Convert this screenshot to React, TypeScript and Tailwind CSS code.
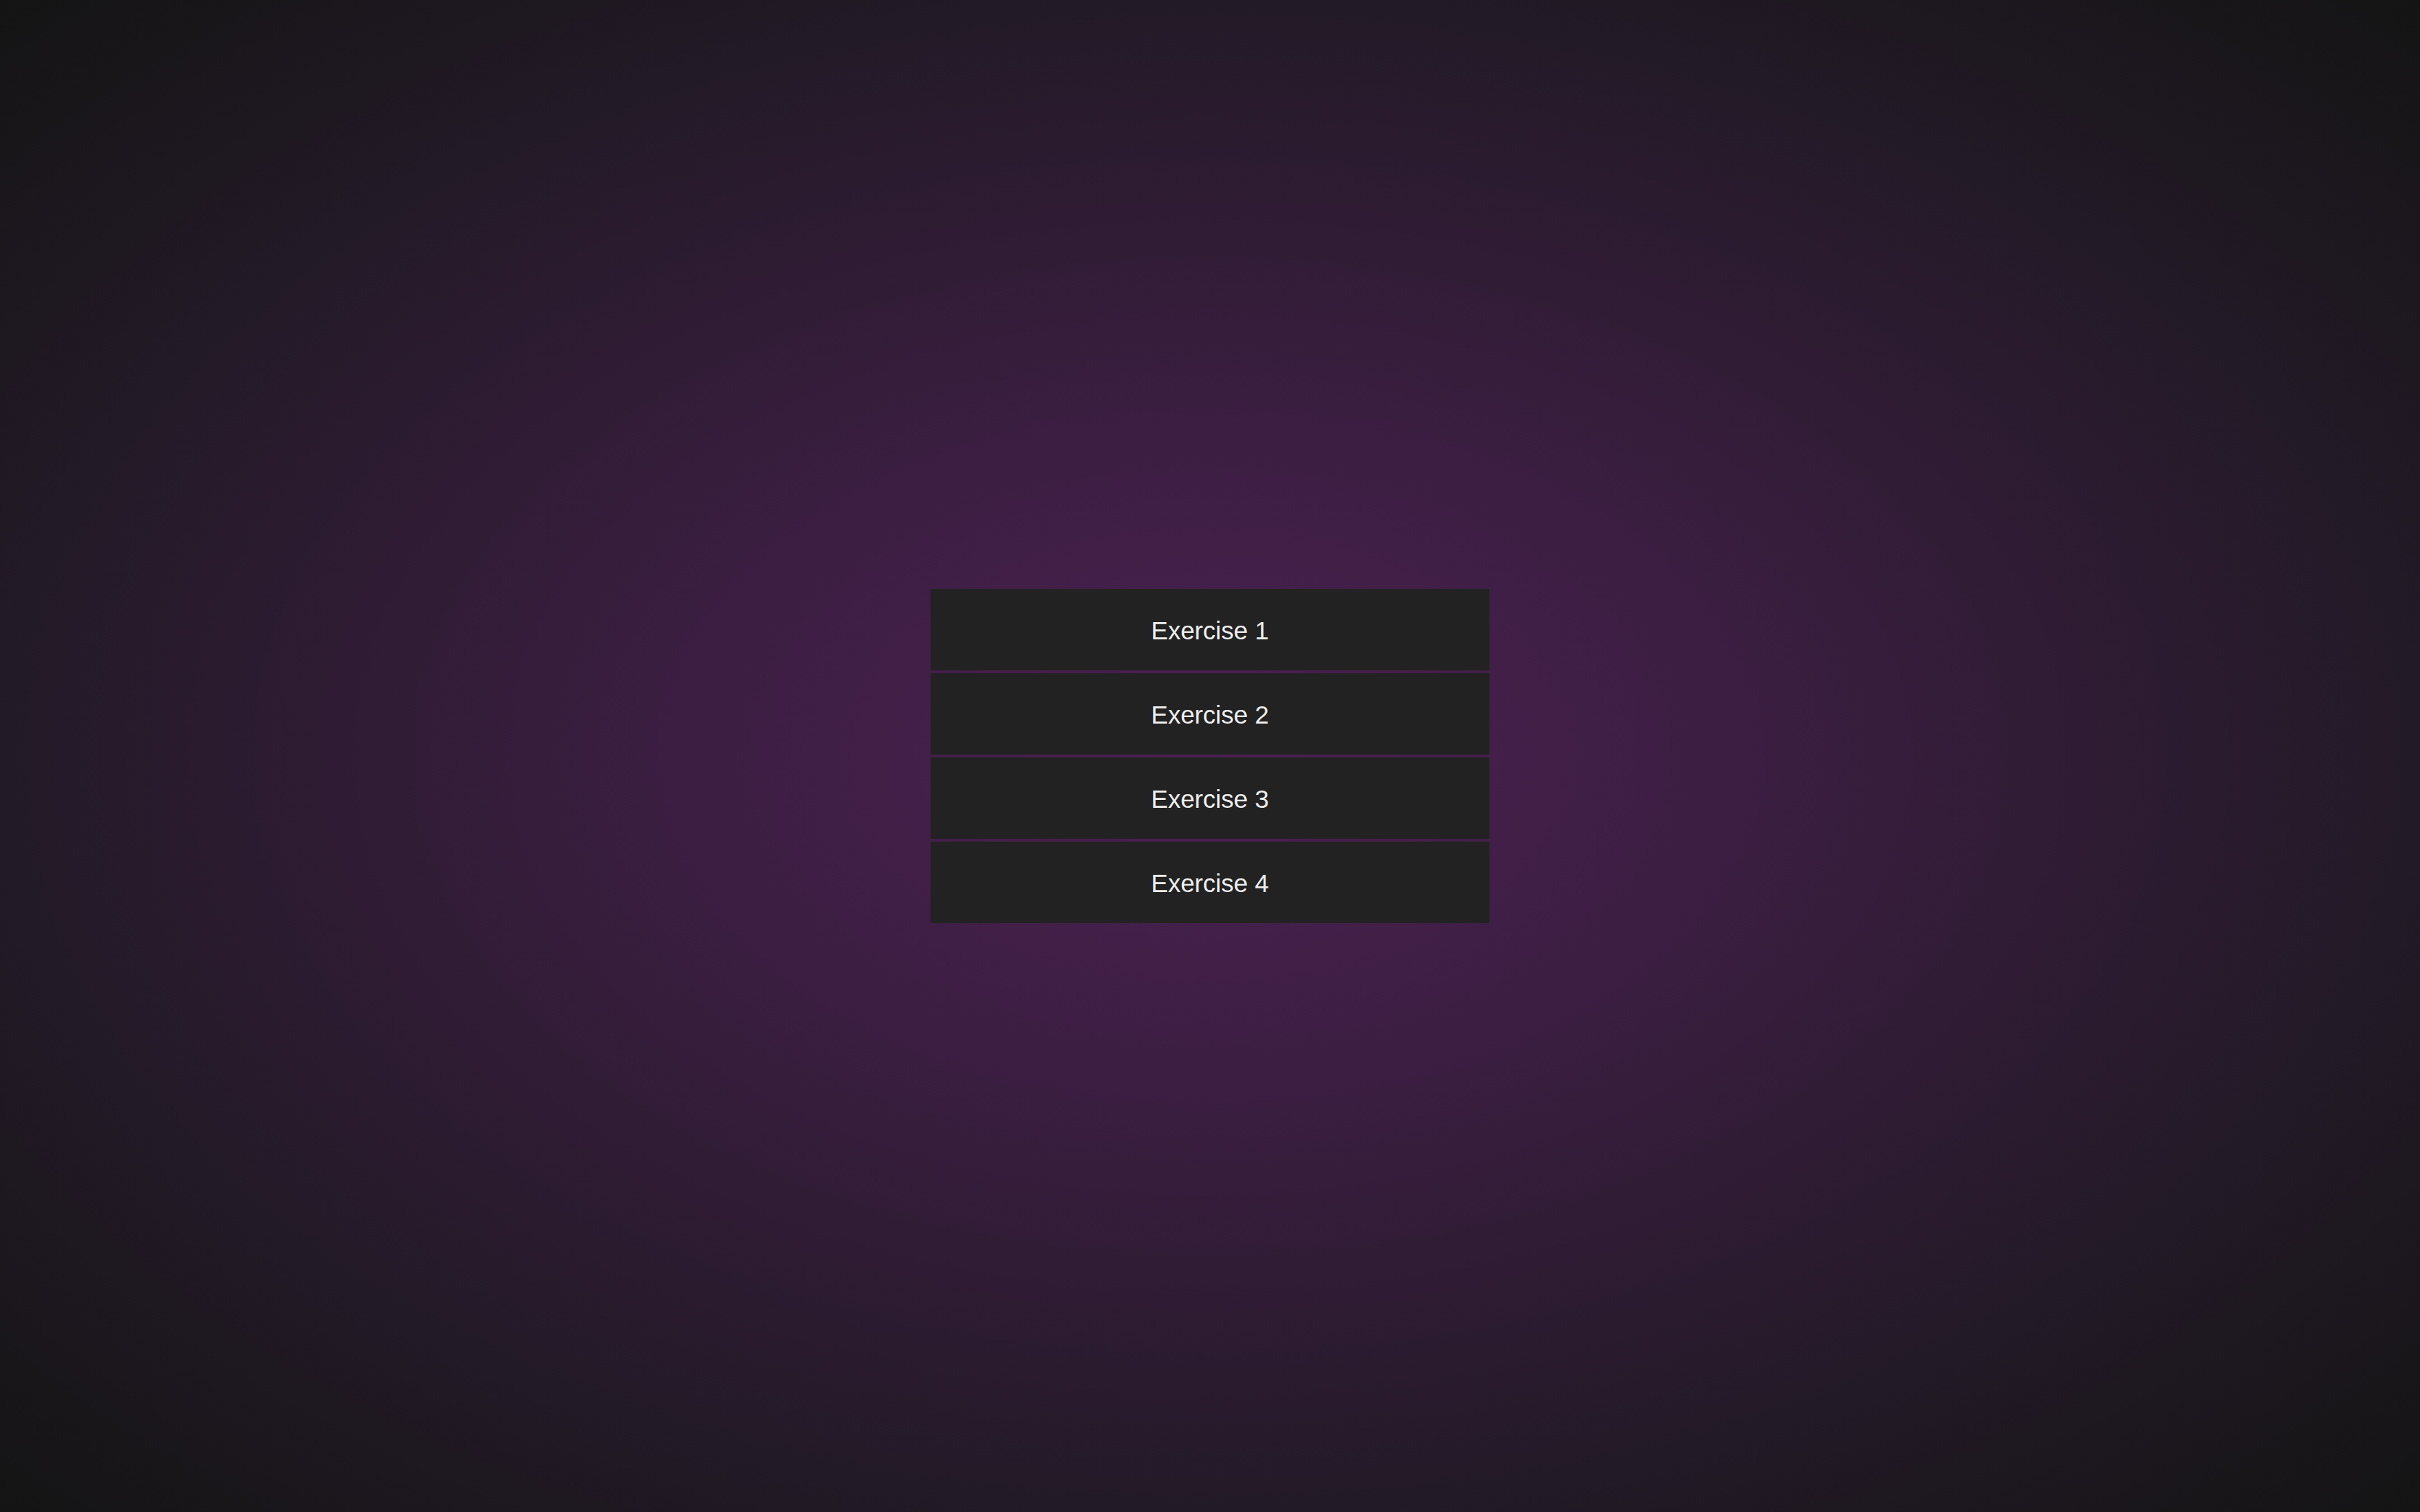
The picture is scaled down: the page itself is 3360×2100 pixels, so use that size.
import React from "react";

const exercises = ["Exercise 1", "Exercise 2", "Exercise 3", "Exercise 4"];

export default function App() {
  return (
    <div className="min-h-screen w-full flex items-center justify-center bg-[radial-gradient(ellipse_at_center,#4b2151_0%,#3c1e42_30%,#231a27_70%,#141414_100%)] font-['Liberation_Sans',Arial,sans-serif]">
      {/* Exercise list */}
      <ul className="w-[776px] flex flex-col gap-[4px]">
        {exercises.map((name) => (
          <li key={name}>
            <button className="w-full h-[113px] pt-[3px] bg-[#222222] text-[#eeeeee] text-[35px] flex items-center justify-center">
              {name}
            </button>
          </li>
        ))}
      </ul>
    </div>
  );
}
